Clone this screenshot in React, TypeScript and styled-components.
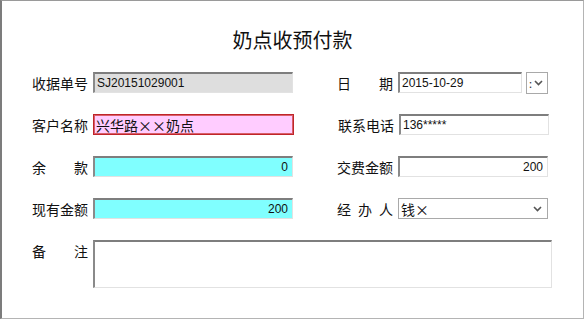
import styled, { createGlobalStyle } from "styled-components";

const Global = createGlobalStyle`
  body {
    margin: 0;
    background: #ffffff;
    font-family: "Noto Sans CJK SC", "Liberation Sans", sans-serif;
  }
`;

const Frame = styled.div`
  box-sizing: border-box;
  width: 584px;
  height: 319px;
  border-style: solid;
  border-color: #9a9a9a #b4b4b4 #b4b4b4 #7c7c7c;
  border-width: 1px 1px 1px 2px;
  padding: 27px 0 0 30px;
  background: #fff;
`;

const Title = styled.h1`
  margin: 0 0 20px -30px;
  height: 24px;
  line-height: 24px;
  text-align: center;
  font-size: 20px;
  font-weight: 400;
  color: #111;
`;

const Form = styled.div`
  display: flex;
  flex-direction: column;
  gap: 21px;
`;

const Row = styled.div`
  display: flex;
  align-items: center;
  height: 21px;
`;

const Field = styled.div<{ $right?: boolean; $top?: boolean }>`
  display: flex;
  align-items: ${({ $top }) => ($top ? "flex-start" : "center")};
  margin-left: ${({ $right }) => ($right ? "44px" : "0")};
`;

const Label = styled.div<{ $pad?: number }>`
  display: flex;
  justify-content: space-between;
  width: 56px;
  margin-right: 5px;
  padding-top: ${({ $pad }) => $pad || 0}px;
  font-size: 14px;
  line-height: 16px;
  color: #111;
`;

type Tone = "plain" | "gray" | "pink" | "cyan";

const bg: Record<Tone, string> = {
  plain: "#ffffff",
  gray: "#dedede",
  pink: "#ffccff",
  cyan: "#80ffff",
};

const Input = styled.div<{ $w: number; $tone?: Tone; $align?: string }>`
  box-sizing: border-box;
  width: ${({ $w }) => $w}px;
  height: 21px;
  display: flex;
  align-items: center;
  justify-content: ${({ $align }) =>
    $align === "right" ? "flex-end" : "flex-start"};
  padding: 0 4px 0 2px;
  background: ${({ $tone }) => bg[$tone || "plain"]};
  border-style: solid;
  border-width: ${({ $tone }) => ($tone === "pink" ? "1px" : "2px 1px 1px 2px")};
  border-color: ${({ $tone }) =>
    $tone === "pink" ? "#c0242a" : "#7e7e7e #e2e2e2 #e2e2e2 #8a8a8a"};
  box-shadow: ${({ $tone }) =>
    $tone === "pink" ? "inset 0 0 0 1px #d8606a" : "none"};
  font-family: "Liberation Sans", "Noto Sans CJK SC", sans-serif;
  font-size: 12px;
  color: #111;
  white-space: nowrap;
`;

const CjkValue = styled.span`
  font-family: "Noto Sans CJK SC", sans-serif;
  font-size: 14px;
`;

const DropBtn = styled.div`
  box-sizing: border-box;
  width: 22px;
  height: 22px;
  margin-left: 4px;
  border: 1px solid #a9a9a9;
  display: flex;
  align-items: center;
  justify-content: space-between;
  padding: 0 4px 0 2px;
  font-size: 11px;
  color: #333;
`;

const Select = styled.div`
  box-sizing: border-box;
  width: 150px;
  height: 21px;
  border: 1px solid #a9a9a9;
  display: flex;
  align-items: center;
  justify-content: space-between;
  padding: 0 5px 0 2px;
  font-size: 14px;
  color: #111;
`;

const Memo = styled.div`
  box-sizing: border-box;
  width: 459px;
  height: 48px;
  border-style: solid;
  border-width: 2px 1px 1px 2px;
  border-color: #7e7e7e #e2e2e2 #e2e2e2 #8a8a8a;
  background: #fff;
`;

const Chevron = () => (
  <svg width="9" height="6" viewBox="0 0 9 6">
    <path d="M1 1 L4.5 4.5 L8 1" fill="none" stroke="#555" strokeWidth="1.6" />
  </svg>
);

const Lbl = ({ text, pad }: { text: string; pad?: number }) => (
  <Label $pad={pad}>
    {text.split("").map((c, i) => (
      <span key={i}>{c}</span>
    ))}
  </Label>
);

export default function App() {
  return (
    <>
      <Global />
      <Frame>
        <Title>奶点收预付款</Title>
        <Form>
          <Row>
            <Field>
              <Lbl text="收据单号" />
              <Input $w={200} $tone="gray">
                SJ20151029001
              </Input>
            </Field>
            <Field $right>
              <Lbl text="日期" />
              <Input $w={124}>2015-10-29</Input>
              <DropBtn>
                <span>:</span>
                <Chevron />
              </DropBtn>
            </Field>
          </Row>
          <Row>
            <Field>
              <Lbl text="客户名称" />
              <Input $w={201} $tone="pink">
                <CjkValue>兴华路××奶点</CjkValue>
              </Input>
            </Field>
            <Field $right>
              <Lbl text="联系电话" />
              <Input $w={150}>136*****</Input>
            </Field>
          </Row>
          <Row>
            <Field>
              <Lbl text="余款" />
              <Input $w={200} $tone="cyan" $align="right">
                0
              </Input>
            </Field>
            <Field $right>
              <Lbl text="交费金额" />
              <Input $w={150} $align="right">
                200
              </Input>
            </Field>
          </Row>
          <Row>
            <Field>
              <Lbl text="现有金额" />
              <Input $w={200} $tone="cyan" $align="right">
                200
              </Input>
            </Field>
            <Field $right>
              <Lbl text="经办人" />
              <Select>
                <span>钱×</span>
                <Chevron />
              </Select>
            </Field>
          </Row>
          <Field $top>
            <Lbl text="备注" pad={3} />
            <Memo />
          </Field>
        </Form>
      </Frame>
    </>
  );
}
